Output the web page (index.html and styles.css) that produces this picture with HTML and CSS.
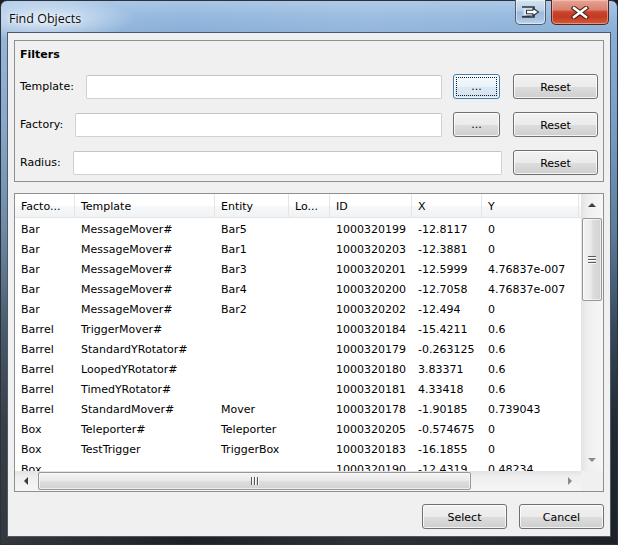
FILE: index.html
```html
<!DOCTYPE html>
<html>
<head>
<meta charset="utf-8">
<title>Find Objects</title>
<link rel="stylesheet" href="styles.css">
</head>
<body>
<div class="window">
  <div class="titlebar">
    <span class="title">Find Objects</span>
    <div class="caption-buttons">
      <div class="cbtn cbtn-help">
        <svg width="20" height="12" viewBox="0 0 20 12">
          <path d="M1 1h12v3.5M13 8.5V11H1z" fill="none" stroke="#2e3640" stroke-width="1.6"/>
          <rect x="2.5" y="2.5" width="9" height="7" fill="#dfe8f1"/>
          <path d="M5.5 4.3h6.5V2.2L17.5 6l-5.5 3.8V7.7H5.5z" fill="#fff" stroke="#2e3640" stroke-width="1.1" stroke-linejoin="round"/>
        </svg>
      </div>
      <div class="cbtn cbtn-close">
        <svg width="18" height="13" viewBox="0 0 18 13">
          <path d="M3 2l12 9M15 2L3 11" stroke="#4a1a12" stroke-width="4.6" stroke-linecap="square"/>
          <path d="M3 2l12 9M15 2L3 11" stroke="#fff" stroke-width="2.6" stroke-linecap="square"/>
        </svg>
      </div>
    </div>
  </div>
  <div class="client">
    <div class="group">
      <div class="group-title">Filters</div>
      <div class="frow">
        <span class="lbl">Template:</span>
        <div class="edit"></div>
        <button class="btn btn-small btn-focus">...</button>
        <button class="btn">Reset</button>
      </div>
      <div class="frow">
        <span class="lbl">Factory:</span>
        <div class="edit"></div>
        <button class="btn btn-small">...</button>
        <button class="btn">Reset</button>
      </div>
      <div class="frow">
        <span class="lbl">Radius:</span>
        <div class="edit"></div>
        <button class="btn">Reset</button>
      </div>
    </div>

    <div class="view">
      <div class="viewport">
        <div class="hrow">
          <div class="hcell">Facto...</div>
          <div class="hcell">Template</div>
          <div class="hcell">Entity</div>
          <div class="hcell">Lo...</div>
          <div class="hcell">ID</div>
          <div class="hcell">X</div>
          <div class="hcell">Y</div>
          <div class="hcell hfill"></div>
        </div>
        <div class="row"><span>Bar</span><span>MessageMover#</span><span>Bar5</span><span></span><span>1000320199</span><span>-12.8117</span><span>0</span></div>
        <div class="row"><span>Bar</span><span>MessageMover#</span><span>Bar1</span><span></span><span>1000320203</span><span>-12.3881</span><span>0</span></div>
        <div class="row"><span>Bar</span><span>MessageMover#</span><span>Bar3</span><span></span><span>1000320201</span><span>-12.5999</span><span>4.76837e-007</span></div>
        <div class="row"><span>Bar</span><span>MessageMover#</span><span>Bar4</span><span></span><span>1000320200</span><span>-12.7058</span><span>4.76837e-007</span></div>
        <div class="row"><span>Bar</span><span>MessageMover#</span><span>Bar2</span><span></span><span>1000320202</span><span>-12.494</span><span>0</span></div>
        <div class="row"><span>Barrel</span><span>TriggerMover#</span><span></span><span></span><span>1000320184</span><span>-15.4211</span><span>0.6</span></div>
        <div class="row"><span>Barrel</span><span>StandardYRotator#</span><span></span><span></span><span>1000320179</span><span>-0.263125</span><span>0.6</span></div>
        <div class="row"><span>Barrel</span><span>LoopedYRotator#</span><span></span><span></span><span>1000320180</span><span>3.83371</span><span>0.6</span></div>
        <div class="row"><span>Barrel</span><span>TimedYRotator#</span><span></span><span></span><span>1000320181</span><span>4.33418</span><span>0.6</span></div>
        <div class="row"><span>Barrel</span><span>StandardMover#</span><span>Mover</span><span></span><span>1000320178</span><span>-1.90185</span><span>0.739043</span></div>
        <div class="row"><span>Box</span><span>Teleporter#</span><span>Teleporter</span><span></span><span>1000320205</span><span>-0.574675</span><span>0</span></div>
        <div class="row"><span>Box</span><span>TestTrigger</span><span>TriggerBox</span><span></span><span>1000320183</span><span>-16.1855</span><span>0</span></div>
        <div class="row"><span>Box</span><span></span><span></span><span></span><span>1000320190</span><span>-12.4319</span><span>0.48234</span></div>
      </div>
      <div class="vscroll">
        <div class="sbtn"><i class="arr arr-up"></i></div>
        <div class="vtrack"><div class="vthumb"><i class="grip-h"></i><i class="grip-h"></i><i class="grip-h"></i></div></div>
        <div class="sbtn"><i class="arr arr-down"></i></div>
      </div>
      <div class="hscroll">
        <div class="sbtn sbtn-h"><i class="arr arr-left"></i></div>
        <div class="htrack"><div class="hthumb"><i class="grip-v"></i><i class="grip-v"></i><i class="grip-v"></i></div></div>
        <div class="sbtn sbtn-h"><i class="arr arr-right"></i></div>
      </div>
      <div class="corner"></div>
    </div>

    <div class="actions">
      <button class="btn">Select</button>
      <button class="btn">Cancel</button>
    </div>
  </div>
</div>
</body>
</html>
```

FILE: styles.css
```css
* { box-sizing: border-box; }
html, body { margin: 0; padding: 0; }
body {
  width: 618px;
  height: 545px;
  overflow: hidden;
  background: #1a1d21;
  font-family: "DejaVu Sans", sans-serif;
  font-size: 11px;
  color: #000;
}

.window {
  width: 618px;
  height: 545px;
  display: flex;
  flex-direction: column;
  padding: 0 6px 7px 6px;
  border: 1px solid #2a323b;
  border-radius: 7px 7px 0 0;
  background:
    radial-gradient(ellipse 90px 22px at 45px 18px, rgba(235,243,251,0.85), rgba(235,243,251,0) 100%),
    linear-gradient(to right, rgba(255,255,255,0.10), rgba(255,255,255,0) 30%, rgba(255,255,255,0.08) 60%, rgba(255,255,255,0) 100%),
    linear-gradient(to bottom, #a9c6e5 0px, #94b8de 16px, #8aafd6 32px, #7a9fc6 120px, #5d7c9c 230px, #34475a 330px, #232a33 420px, #1d2126 545px);
}

.titlebar {
  height: 31px;
  display: flex;
  align-items: flex-start;
  flex: none;
}
.title {
  font-family: "Open Sans", "DejaVu Sans", sans-serif;
  font-size: 12.5px;
  line-height: 16px;
  margin: 10px 0 0 2px;
  color: #0b0b0b;
  text-shadow: 0 0 6px #eef5fc, 0 0 3px #eef5fc;
}
.caption-buttons {
  margin-left: auto;
  margin-right: 2px;
  display: flex;
  gap: 5px;
  margin-top: -1px;
}
.cbtn {
  height: 25px;
  display: flex;
  align-items: center;
  justify-content: center;
  border-radius: 0 0 5px 5px;
}
.cbtn-help {
  width: 31px;
  border: 1px solid #4e5d6e;
  border-top: none;
  background: linear-gradient(to bottom, #d5e3f1 0%, #b9cfe6 45%, #9dbadb 50%, #a9c4e2 80%, #c1d6ec 100%);
  box-shadow: inset 0 0 0 1px rgba(255,255,255,0.45);
}
.cbtn-close {
  width: 58px;
  border: 1px solid #5a2218;
  border-top: none;
  background: linear-gradient(to bottom, #e6a595 0%, #d98270 40%, #c8442b 50%, #c23b22 70%, #d35a3c 100%);
  box-shadow: inset 0 0 0 1px rgba(255,220,210,0.45);
}

.client {
  flex: 1;
  display: flex;
  flex-direction: column;
  border: 1px solid #4b5969;
  background: #f0f0f0;
  padding: 7px 6px;
}

.group {
  height: 142px;
  border: 1px solid #8f9090;
  padding: 0 5px 6px 5px;
  flex: none;
}
.group-title {
  font-weight: bold;
  line-height: 14px;
  margin: 7px 0 12px 0;
}
.frow {
  display: flex;
  align-items: center;
  height: 25px;
  gap: 11px;
  margin-bottom: 13px;
}
.frow:last-child { margin-bottom: 0; }
.lbl {
  white-space: nowrap;
  line-height: 13px;
  margin-right: 1px;
}
.edit {
  flex: 1;
  height: 24px;
  background: #fff;
  border: 1px solid #cfd1d4;
  border-top-color: #c2c4c8;
  border-radius: 2px;
}

.btn {
  width: 85px;
  height: 25px;
  padding: 1px 0 0 0;
  margin: 0;
  font-family: inherit;
  font-size: 11px;
  color: #000;
  border: 1px solid #707070;
  border-radius: 3px;
  background: linear-gradient(to bottom, #f2f2f2 0%, #ebebeb 50%, #dddddd 51%, #cfcfcf 100%);
  box-shadow: inset 0 0 0 1px rgba(255,255,255,0.75);
  flex: none;
}
.btn-small {
  width: 47px;
  margin-right: 2px;
  line-height: 18px;
}
.btn-focus {
  border-color: #3c7fb1;
  background: linear-gradient(to bottom, #f6fafd 0%, #eaf3fa 50%, #dce9f4 51%, #d3e4f1 100%);
  outline: 1px dotted #1a1a1a;
  outline-offset: -4px;
}

.view {
  margin-top: 11px;
  height: 299px;
  flex: none;
  border: 1px solid #8b8f96;
  background: #fff;
  display: grid;
  grid-template-columns: 566px 22px;
  grid-template-rows: 277px 20px;
}
.viewport {
  overflow: hidden;
  background: #fff;
}
.hrow, .row {
  display: grid;
  grid-template-columns: 60px 140px 74px 41px 82px 70px 97px 2px;
}
.hrow {
  height: 24px;
  border-bottom: 1px solid #e2e4e7;
  background: linear-gradient(to bottom, #ffffff 0%, #ffffff 50%, #f7f8f9 51%, #f1f2f4 100%);
}
.hcell {
  border-right: 1px solid #e3e5e8;
  padding: 2px 0 0 6px;
  line-height: 21px;
  white-space: nowrap;
  overflow: hidden;
}
.hfill { border-right: none; }
.row {
  height: 20px;
}
.row span {
  padding: 2px 0 0 6px;
  line-height: 20px;
  white-space: nowrap;
  overflow: visible;
}

.vscroll {
  display: flex;
  flex-direction: column;
  background: linear-gradient(to right, #e3e3e3 0%, #efefef 30%, #f6f6f6 100%);
}
.sbtn {
  height: 22px;
  flex: none;
  display: flex;
  align-items: center;
  justify-content: center;
}
.sbtn-h {
  width: 22px;
  height: auto;
}
.vtrack {
  flex: 1;
  padding: 2px 1px 0 1px;
}
.vthumb {
  height: 83px;
  border: 1px solid #979797;
  border-radius: 2px;
  background: linear-gradient(to right, #f3f3f3 0%, #eaeaea 45%, #dcdcdc 55%, #d2d2d2 100%);
  box-shadow: inset 0 0 0 1px rgba(255,255,255,0.6);
  display: flex;
  flex-direction: column;
  align-items: center;
  justify-content: center;
  gap: 2px;
}
.grip-h {
  display: block;
  width: 8px;
  height: 1px;
  background: #595959;
  box-shadow: 0 1px 0 #fafafa;
}
.hscroll {
  display: flex;
  background: linear-gradient(to bottom, #e3e3e3 0%, #efefef 30%, #f6f6f6 100%);
}
.htrack {
  flex: 1;
  padding: 1px 0 1px 1px;
}
.hthumb {
  width: 433px;
  height: 100%;
  border: 1px solid #979797;
  border-radius: 2px;
  background: linear-gradient(to bottom, #f3f3f3 0%, #eaeaea 45%, #dcdcdc 55%, #d2d2d2 100%);
  box-shadow: inset 0 0 0 1px rgba(255,255,255,0.6);
  display: flex;
  align-items: center;
  justify-content: center;
  gap: 2px;
}
.grip-v {
  display: block;
  width: 1px;
  height: 8px;
  background: #595959;
  box-shadow: 1px 0 0 #fafafa;
}
.corner { background: #f0f0f0; }

.arr { display: block; width: 0; height: 0; }
.arr-up {
  border-left: 4px solid transparent;
  border-right: 4px solid transparent;
  border-bottom: 4px solid #3c3c3c;
}
.arr-down {
  border-left: 4px solid transparent;
  border-right: 4px solid transparent;
  border-top: 4px solid #8a8a8a;
}
.arr-left {
  border-top: 4px solid transparent;
  border-bottom: 4px solid transparent;
  border-right: 4px solid #3c3c3c;
}
.arr-right {
  border-top: 4px solid transparent;
  border-bottom: 4px solid transparent;
  border-left: 4px solid #8a8a8a;
}

.actions {
  margin-top: 12px;
  display: flex;
  justify-content: flex-end;
  gap: 12px;
}
```
